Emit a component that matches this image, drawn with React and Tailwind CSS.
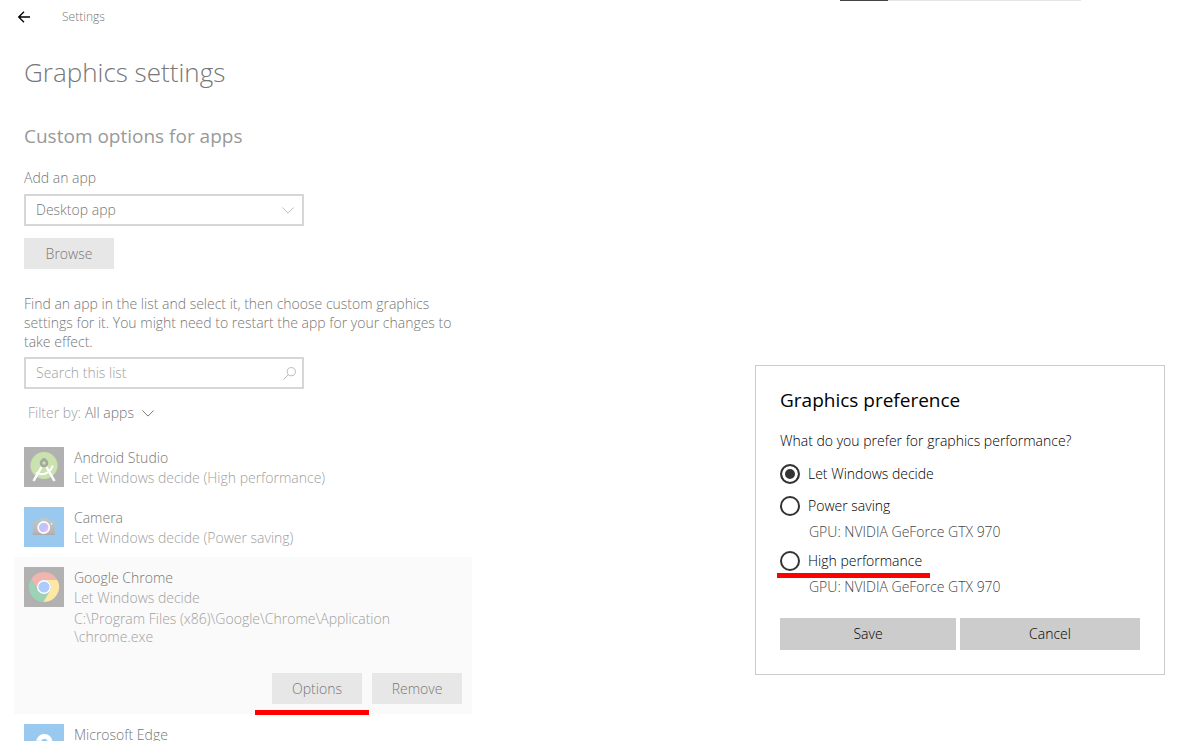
import React from "react";

function ChevronDown({ className }) {
  return (
    <svg className={className} width="12" height="7" viewBox="0 0 12 7" fill="none" stroke="currentColor" aria-hidden="true">
      <path d="M0.4 0.5 L6 6.1 L11.6 0.5" />
    </svg>
  );
}

function AndroidStudioIcon() {
  return (
    <svg className="size-10 shrink-0" viewBox="0 0 40 40" aria-hidden="true">
      <rect width="40" height="40" fill="#b1b1b1" />
      <circle cx="20" cy="18.5" r="13.5" fill="#c9e2ae" />
      <path d="M18.5 11h3v3h-3z" fill="#a9aea6" />
      <circle cx="20" cy="16" r="3" fill="none" stroke="#a3a8a0" strokeWidth="2.6" />
      <path d="M17.5 20 L9.5 34 M22.5 20 L30.5 34" stroke="#fff" strokeWidth="2.4" fill="none" />
      <path d="M12 25.5 C18 29 26 27 28.8 18.5" stroke="#fff" strokeWidth="2" fill="none" />
    </svg>
  );
}

function CameraIcon() {
  return (
    <svg className="size-10 shrink-0" viewBox="0 0 40 40" aria-hidden="true">
      <defs>
        <linearGradient id="lens" x1="0" y1="0" x2="1" y2="1">
          <stop offset="0" stopColor="#a9d4fb" />
          <stop offset="0.55" stopColor="#c9bdf6" />
          <stop offset="1" stopColor="#efc6f4" />
        </linearGradient>
        <linearGradient id="body" x1="0" y1="0" x2="0" y2="1">
          <stop offset="0" stopColor="#c6c6c6" />
          <stop offset="1" stopColor="#b3b3b3" />
        </linearGradient>
      </defs>
      <rect width="40" height="40" fill="#99c9ef" />
      <rect x="10.5" y="12.5" width="3" height="2" fill="#a9c4cf" />
      <path d="M9.5 14H15L16.8 11.200H23.800L25.500 14H29.700Q30.700 14 30.700 15V27.500Q30.700 28 30.200 28H9.200Q8.700 28 8.700 27.500V15Q8.700 14 9.500 14Z" fill="url(#body)" />
      <rect x="8.700" y="26.500" width="22" height="1.500" fill="#acacac" />
      <circle cx="19.700" cy="20.500" r="6.400" fill="#fff" />
      <circle cx="19.700" cy="20.500" r="4.800" fill="url(#lens)" />
      <circle cx="27.500" cy="16.800" r="0.900" fill="#f2f2f2" />
    </svg>
  );
}

function ChromeIcon() {
  return (
    <svg className="size-10 shrink-0" viewBox="0 0 40 40" aria-hidden="true">
      <rect width="40" height="40" fill="#b1b1b1" />
      <path d="M7.300 12A15 15 0 0 1 33.300 13H20A7 7 0 0 0 13.940 23.500Z" fill="#f0b4b1" />
      <path d="M7.300 12L13.940 23.500A7 7 0 0 0 26.060 23.500L19.400 35A15 15 0 0 1 7.300 12Z" fill="#9bd3b7" />
      <path d="M33.300 13H20A7 7 0 0 1 26.060 23.500L19.400 35A15 15 0 0 0 33.300 13Z" fill="#fee7a3" />
      <circle cx="20" cy="20" r="7" fill="#fff" />
      <circle cx="20" cy="20" r="5.600" fill="#adcbfd" />
    </svg>
  );
}

function EdgeIcon() {
  return (
    <svg className="size-10 shrink-0" viewBox="0 0 40 40" aria-hidden="true">
      <rect width="40" height="40" fill="#99c9ef" />
      <path d="M11.500 18.500C13 13 16 10 20.300 10C25.500 10 28.600 14 28.600 19V22H16.500C17 27 23.500 28 27.700 25V29C20 33 12 29 12 22C12 19 13.500 17 15.500 15.800C13.500 16.300 12.300 17.500 11.500 18.500ZM16.600 18.800H24C24 13.500 17.200 13.500 16.600 18.800Z" fill="#fff" />
    </svg>
  );
}

function GrayButton({ children }) {
  return (
    <button type="button" className="h-[31px] w-[90px] bg-[#e7e7e7] text-[#777]">
      {children}
    </button>
  );
}

function AppRow({ icon, name, detail, children }) {
  return (
    <li className="flex gap-[10px] px-[10px] pt-[10px] pb-[9px]">
      {icon}
      <div className="min-h-[41px] min-w-0 pt-px leading-5">
        <p>{name}</p>
        {detail && <p className="text-[#a0a0a0]">{detail}</p>}
        {children}
      </div>
    </li>
  );
}

function Preference({ id, label, note, checked, marked }) {
  return (
    <div>
      <div className="relative flex h-5 items-center gap-2">
        <input
          id={id}
          type="radio"
          name="preference"
          defaultChecked={checked}
          className="size-5 appearance-none rounded-full border-2 border-[#333] bg-white checked:bg-[#333] checked:shadow-[inset_0_0_0_3px_white]"
        />
        <label htmlFor={id}>{label}</label>
        {marked && <span className="absolute top-[22px] -left-[3px] h-[5px] w-[153px] bg-[#fe0000]" />}
      </div>
      {note && <p className="mt-[6px] -mb-[3px] pl-[29px] leading-5 text-[#444]">{note}</p>}
    </div>
  );
}

export default function App() {
  return (
    <div className="h-screen overflow-hidden bg-white font-['Open_Sans','Noto_Sans',sans-serif] text-sm font-light">
      <div className="flex h-px justify-end pr-[113px]">
        <div className="w-12 bg-[#444]" />
        <div className="w-[193px] bg-[#e5e5e5]" />
      </div>
      <header className="flex h-[31px] items-center pl-[18px]">
        <button type="button" aria-label="Back" className="mr-8 text-black">
          <svg width="12" height="12" viewBox="0 0 12 12" fill="none" stroke="currentColor" strokeWidth="1.300" aria-hidden="true">
            <path d="M0.700 6H12M6 0.700L0.700 6L6 11.300" />
          </svg>
        </button>
        <span className="text-xs text-[#777]">Settings</span>
      </header>
      <div className="flex items-start justify-between">
        <main className="w-[472px] pl-6 text-[#777]">
          <h1 className="mt-5 text-[26px] leading-10">Graphics settings</h1>
          <h2 className="mt-7 text-[19px] leading-8 font-normal text-[#999]">Custom options for apps</h2>
          <label htmlFor="kind" className="mt-4 block leading-5">Add an app</label>
          <div className="mt-[6px] grid w-[280px] items-center">
            <select id="kind" className="col-start-1 row-start-1 h-8 appearance-none border-2 border-[#d6d6d6] bg-white px-[10px]">
              <option>Desktop app</option>
            </select>
            <ChevronDown className="pointer-events-none col-start-1 row-start-1 mr-[10px] justify-self-end text-[#bbb]" />
          </div>
          <div className="mt-3">
            <GrayButton>Browse</GrayButton>
          </div>
          <p className="mt-[25px] mr-5 leading-[19px]">
            Find an app in the list and select it, then choose custom graphics settings for it. You might need to restart the app for your changes to take effect.
          </p>
          <div className="mt-[6px] grid w-[280px] items-center">
            <input type="text" aria-label="Search this list" placeholder="Search this list" className="col-start-1 row-start-1 h-8 border-2 border-[#d6d6d6] px-[10px] pb-[2px] placeholder:text-[#a0a0a0]" />
            <svg className="col-start-1 row-start-1 mr-2 justify-self-end text-[#bbb]" width="13" height="13" viewBox="0 0 13 13" fill="none" stroke="currentColor" aria-hidden="true">
              <circle cx="8.300" cy="4.700" r="4.100" />
              <path d="M5.400 7.600L0.400 12.600" />
            </svg>
          </div>
          <button type="button" className="mt-[14px] ml-1 flex h-5 items-center">
            <span className="text-[#a0a0a0]">Filter by:</span>
            <span className="ml-1">All apps</span>
            <ChevronDown className="ml-2" />
          </button>
          <ul className="mt-[14px] -ml-[10px]">
            <AppRow icon={<AndroidStudioIcon />} name="Android Studio" detail="Let Windows decide (High performance)" />
            <AppRow icon={<CameraIcon />} name="Camera" detail="Let Windows decide (Power saving)" />
            <li className="bg-[#fafafa]">
              <ul>
                <AppRow icon={<ChromeIcon />} name="Google Chrome" detail="Let Windows decide">
                  <p className="mt-[2px] leading-[18px] text-[#a0a0a0]">
                    C:\Program Files (x86)\Google\Chrome\Application
                    <br />
                    \chrome.exe
                  </p>
                </AppRow>
              </ul>
              <div className="mt-[18px] flex justify-end gap-[10px] pr-[10px] pb-[10px]">
                <div className="relative">
                  <GrayButton>Options</GrayButton>
                  <span className="absolute top-[37px] -left-[17px] h-[5px] w-[114px] bg-[#fe0000]" />
                </div>
                <GrayButton>Remove</GrayButton>
              </div>
            </li>
            <AppRow icon={<EdgeIcon />} name="Microsoft Edge" />
          </ul>
        </main>
        <section role="dialog" aria-labelledby="dialog-title" className="mt-[333px] mr-[29px] w-[410px] border border-[#ccc] bg-white p-6 text-black">
          <h2 id="dialog-title" className="text-[19px] leading-5 font-normal">Graphics preference</h2>
          <p className="mt-[21px] leading-5">What do you prefer for graphics performance?</p>
          <div className="mt-[13px] flex flex-col gap-3">
            <Preference id="auto" label="Let Windows decide" checked />
            <Preference id="saving" label="Power saving" note="GPU: NVIDIA GeForce GTX 970" />
            <Preference id="high" label="High performance" note="GPU: NVIDIA GeForce GTX 970" marked />
          </div>
          <div className="mt-6 flex gap-1">
            <button type="button" className="h-8 w-44 bg-[#ccc]">Save</button>
            <button type="button" className="h-8 flex-1 bg-[#ccc]">Cancel</button>
          </div>
        </section>
      </div>
    </div>
  );
}
